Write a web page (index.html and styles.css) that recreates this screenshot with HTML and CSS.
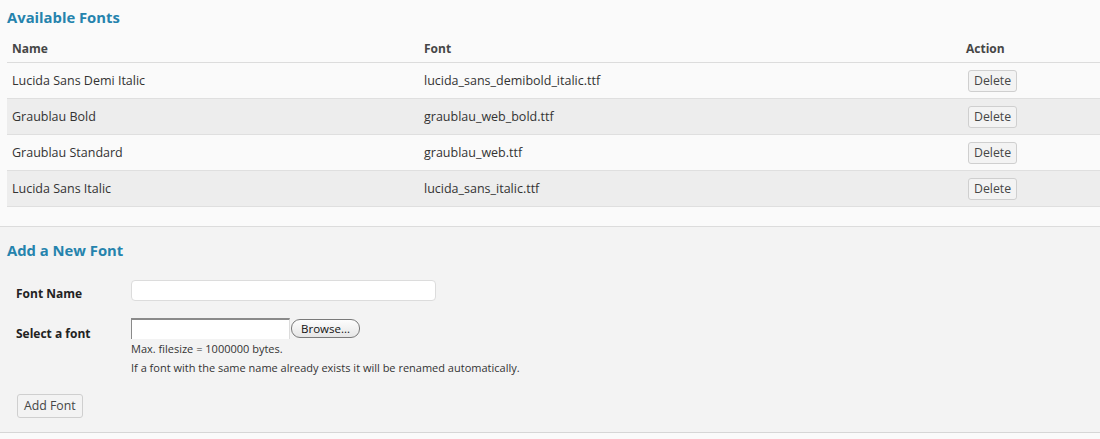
FILE: index.html
```html
<!DOCTYPE html>
<html>
<head>
<meta charset="utf-8">
<link rel="stylesheet" href="styles.css">
</head>
<body>
<div class="top">
  <h2 class="title">Available Fonts</h2>
  <table class="fonts">
    <thead>
      <tr><th class="c-name">Name</th><th class="c-file">Font</th><th class="c-act">Action</th></tr>
    </thead>
    <tbody>
      <tr><td>Lucida Sans Demi Italic</td><td>lucida_sans_demibold_italic.ttf</td><td class="c-act"><button class="btn">Delete</button></td></tr>
      <tr class="alt"><td>Graublau Bold</td><td>graublau_web_bold.ttf</td><td class="c-act"><button class="btn">Delete</button></td></tr>
      <tr><td>Graublau Standard</td><td>graublau_web.ttf</td><td class="c-act"><button class="btn">Delete</button></td></tr>
      <tr class="alt"><td>Lucida Sans Italic</td><td>lucida_sans_italic.ttf</td><td class="c-act"><button class="btn">Delete</button></td></tr>
    </tbody>
  </table>
</div>
<div class="bottom">
  <h2 class="title">Add a New Font</h2>
  <div class="form">
    <div class="row">
      <label class="lbl">Font Name</label>
      <div class="field"><input class="text" type="text"></div>
    </div>
    <div class="row row-file">
      <label class="lbl lbl-file">Select a font</label>
      <div class="field">
        <div class="file"><span class="filebox"></span><span class="browse">Browse...</span></div>
        <p class="note first">Max. filesize = 1000000 bytes.</p>
        <p class="note">If a font with the same name already exists it will be renamed automatically.</p>
      </div>
    </div>
    <button class="btn add">Add Font</button>
  </div>
</div>
<div class="foot"></div>
</body>
</html>
```
FILE: styles.css
```css
html, body { margin: 0; padding: 0; }
body {
  font-family: "Open Sans", "DejaVu Sans", sans-serif;
  color: #333;
  background: #fafafa;
  width: 1100px;
  height: 439px;
  overflow: hidden;
}
.top {
  background: #fafafa;
  padding: 7px 0 19px 7px;
  height: 200px;
  border-bottom: 1px solid #dcdcdc;
}
.title {
  margin: 0;
  font-size: 14.8px;
  font-weight: 700;
  color: #2583ad;
  line-height: 20px;
}
.fonts {
  width: 1093px;
  border-collapse: collapse;
  margin-top: 11px;
  font-size: 12.5px;
}
.fonts th {
  text-align: left;
  font-size: 12px;
  font-weight: 700;
  color: #464646;
  height: 20px;
  padding: 4px 5px 0;
  border-bottom: 1px solid #dcdcdc;
  vertical-align: top;
  line-height: 14px;
}
.fonts td {
  height: 35px;
  padding: 0 5px;
  border-bottom: 1px solid #dfdfdf;
  color: #333;
}
.fonts .c-name { width: 402px; }
.fonts .c-file { width: 521px; }
.fonts th.c-act { padding-left: 16px; }
.fonts td.c-act { padding-left: 18px; }
.fonts tr.alt td { background: #ededed; }
.btn {
  font-family: "Open Sans", "DejaVu Sans", sans-serif;
  font-size: 12.3px;
  color: #464646;
  background: #f3f3f3;
  border: 1px solid #cfcfcf;
  border-radius: 3px;
  height: 22px;
  padding: 0 5px;
  line-height: 20px;
}
.bottom {
  background: #f3f3f3;
  padding: 13px 0 0 7px;
  height: 192px;
  border-bottom: 1px solid #d6d6d6;
}
.form { padding: 20px 0 0 9px; }
.row { display: flex; align-items: flex-start; }
.lbl {
  width: 115px;
  font-size: 12px;
  font-weight: 700;
  color: #222;
  line-height: 20px;
  padding-top: 4px;
}
.lbl-file { padding-top: 6px; }
.text {
  width: 303px;
  height: 19px;
  box-sizing: content-box;
  padding: 0;
  border: 1px solid #dcdcdc;
  border-radius: 4px;
  background: #fff;
  display: block;
}
.row-file { margin-top: 14px; }
.file { display: flex; align-items: center; height: 21px; }
.filebox {
  width: 157px;
  height: 19px;
  background: #fff;
  border-top: 2px solid #8a8a8a;
  border-left: 1px solid #8a8a8a;
  border-right: 1px solid #dcdcdc;
  box-sizing: content-box;
}
.browse {
  margin-left: 1px;
  height: 17px;
  line-height: 17px;
  padding: 0 9px;
  border: 1px solid #7a7a7a;
  border-radius: 9px;
  background: linear-gradient(#fdfdfd, #e6e6e6);
  font-size: 11.5px;
  color: #111;
}
.note {
  margin: 0;
  font-size: 11px;
  color: #333;
  line-height: 19px;
}
.note.first { margin-top: 0; }
.add { margin-top: 17px; margin-left: 1px; height: 24px; padding: 0 6px; }
.foot { background: #fafafa; height: 7px; }
```
